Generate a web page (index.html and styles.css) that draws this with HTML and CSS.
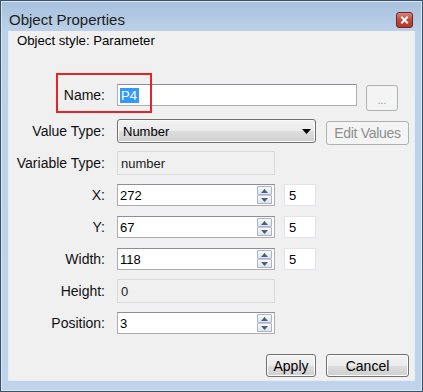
FILE: index.html
```html
<!DOCTYPE html>
<html>
<head>
<meta charset="utf-8">
<title>Object Properties</title>
<link rel="stylesheet" href="styles.css">
</head>
<body>
<div class="window">
  <div class="titlebar">
    <span class="title">Object Properties</span>
    <span class="close">
      <svg width="17" height="16" viewBox="0 0 17 16">
        <defs>
          <linearGradient id="cg" x1="0" y1="0" x2="0" y2="1">
            <stop offset="0" stop-color="#d98a80"/>
            <stop offset="0.5" stop-color="#c2473b"/>
            <stop offset="1" stop-color="#b2382c"/>
          </linearGradient>
        </defs>
        <rect x="0.5" y="0.5" width="16" height="15" rx="2.5" fill="url(#cg)" stroke="#6b2a25"/>
        <path d="M6 5.5 L11 10.5 M11 5.5 L6 10.5" stroke="#ffffff" stroke-width="2" stroke-linecap="square"/>
      </svg>
    </span>
  </div>
  <div class="client">
    <div class="style-line">Object style: Parameter</div>
    <div class="form">
      <div class="row row-name">
        <span class="lbl">Name:</span>
        <div class="field text name-field"><span class="selected">P4</span></div>
        <span class="btn disabled dots">...</span>
        <span class="mark"></span>
      </div>
      <div class="row row-type">
        <span class="lbl">Value Type:</span>
        <div class="select">
          <span>Number</span>
          <svg class="caret" width="9" height="5" viewBox="0 0 9 5"><path d="M0 0 H9 L4.5 5 Z" fill="#000"/></svg>
        </div>
        <span class="btn disabled edit">Edit Values</span>
      </div>
      <div class="row">
        <span class="lbl">Variable Type:</span>
        <div class="field readonly">number</div>
      </div>
      <div class="row">
        <span class="lbl">X:</span>
        <div class="field spin"><span class="val">272</span>
          <span class="arrows"><span class="arr up"><svg width="7" height="4" viewBox="0 0 7 4"><path d="M0 4 L3.5 0 L7 4 Z" fill="#4c5e7d"/></svg></span><span class="arr down"><svg width="7" height="4" viewBox="0 0 7 4"><path d="M0 0 H7 L3.5 4 Z" fill="#4c5e7d"/></svg></span></span>
        </div>
        <div class="field small">5</div>
      </div>
      <div class="row">
        <span class="lbl">Y:</span>
        <div class="field spin"><span class="val">67</span>
          <span class="arrows"><span class="arr up"><svg width="7" height="4" viewBox="0 0 7 4"><path d="M0 4 L3.5 0 L7 4 Z" fill="#4c5e7d"/></svg></span><span class="arr down"><svg width="7" height="4" viewBox="0 0 7 4"><path d="M0 0 H7 L3.5 4 Z" fill="#4c5e7d"/></svg></span></span>
        </div>
        <div class="field small">5</div>
      </div>
      <div class="row">
        <span class="lbl">Width:</span>
        <div class="field spin"><span class="val">118</span>
          <span class="arrows"><span class="arr up"><svg width="7" height="4" viewBox="0 0 7 4"><path d="M0 4 L3.5 0 L7 4 Z" fill="#4c5e7d"/></svg></span><span class="arr down"><svg width="7" height="4" viewBox="0 0 7 4"><path d="M0 0 H7 L3.5 4 Z" fill="#4c5e7d"/></svg></span></span>
        </div>
        <div class="field small">5</div>
      </div>
      <div class="row">
        <span class="lbl">Height:</span>
        <div class="field readonly">0</div>
      </div>
      <div class="row">
        <span class="lbl">Position:</span>
        <div class="field spin"><span class="val">3</span>
          <span class="arrows"><span class="arr up"><svg width="7" height="4" viewBox="0 0 7 4"><path d="M0 4 L3.5 0 L7 4 Z" fill="#4c5e7d"/></svg></span><span class="arr down"><svg width="7" height="4" viewBox="0 0 7 4"><path d="M0 0 H7 L3.5 4 Z" fill="#4c5e7d"/></svg></span></span>
        </div>
      </div>
    </div>
    <div class="actions">
      <span class="btn apply">Apply</span>
      <span class="btn cancel">Cancel</span>
    </div>
  </div>
</div>
</body>
</html>
```

FILE: styles.css
```css
* { box-sizing: border-box; }
html, body { margin: 0; padding: 0; }
body {
  width: 423px;
  height: 392px;
  font-family: "Liberation Sans", Arial, sans-serif;
  font-size: 13px;
  color: #000;
  background: #fff;
}
.window {
  width: 423px;
  height: 392px;
  border: 1px solid #3d5166;
  background: linear-gradient(to bottom, #a7c0dc 0px, #bcd1e8 30px, #bfd4eb 100%);
  display: flex;
  flex-direction: column;
  box-shadow: inset 1px 1px 0 #d9e6f4, inset -1px -1px 0 #d9e6f4;
}
.titlebar {
  height: 30px;
  flex: none;
  display: flex;
  align-items: flex-start;
  justify-content: space-between;
  padding: 0 9px 0 8px;
}
.title {
  font-size: 15px;
  line-height: 18px;
  margin-top: 10px;
  color: #1c1c1c;
}
.close {
  display: block;
  width: 17px;
  height: 16px;
  margin-top: 11px;
}
.close svg { display: block; }
.client {
  flex: 1;
  margin: 0 7px 10px 7px;
  background: #f0f0f0;
  border: 1px solid #e6edf5;
  border-top: none;
  display: flex;
  flex-direction: column;
}
.style-line {
  line-height: 16px;
  padding: 2px 0 0 8px;
  font-size: 13.2px;
}
.form {
  margin-top: 30px;
  display: flex;
  flex-direction: column;
}
.row {
  height: 32px;
  display: flex;
  align-items: center;
  gap: 9px;
  position: relative;
}
.row-name { margin-bottom: 4px; }
.lbl {
  width: 96px;
  margin-right: 3px;
  text-align: right;
  color: #111;
  flex: none;
  font-size: 14px;
}
.field {
  height: 22px;
  border: 1px solid #abadb3;
  border-top-color: #8a8f99;
  background: #fff;
  display: flex;
  align-items: center;
  padding-left: 2px;
  flex: none;
}
.name-field { width: 240px; }
.selected {
  background: #3399ff;
  color: #fff;
  padding: 0 2px 0 1px;
  line-height: 15px;
}
.readonly {
  width: 158px;
  height: 24px;
  background: #f0f0f0;
  border: 1px solid #dadada;
  padding-left: 3px;
  color: #222;
}
.spin {
  width: 158px;
  justify-content: space-between;
  padding: 0 1px 0 2px;
}
.arrows {
  display: flex;
  flex-direction: column;
  width: 15px;
  height: 18px;
  margin-right: 1px;
}
.arr {
  flex: 1;
  border: 1px solid #a9b5c6;
  background: linear-gradient(to bottom, #fbfcfe, #dce3ec);
  display: flex;
  align-items: center;
  justify-content: center;
  border-radius: 1px;
}
.arr + .arr { border-top-color: #c1c9d5; }
.arr svg { display: block; }
.small {
  width: 32px;
  border: 1px solid #e1e3e8;
  padding-left: 4px;
}
.select {
  width: 199px;
  height: 24px;
  border: 1px solid #707070;
  border-radius: 3px;
  background: linear-gradient(to bottom, #f2f2f2 0%, #ebebeb 50%, #dddddd 51%, #cfcfcf 100%);
  display: flex;
  align-items: center;
  justify-content: space-between;
  padding: 0 4px 0 5px;
  flex: none;
  box-shadow: inset 0 0 0 1px #fcfcfc;
}
.caret { display: block; }
.btn {
  display: flex;
  align-items: center;
  justify-content: center;
  border: 1px solid #707070;
  border-radius: 3px;
  background: linear-gradient(to bottom, #f2f2f2 0%, #ebebeb 50%, #dddddd 51%, #cfcfcf 100%);
  box-shadow: inset 0 0 0 1px #fcfcfc;
  height: 24px;
  flex: none;
  font-size: 14px;
}
.btn.disabled {
  border-color: #adb2b5;
  background: #f4f4f4;
  color: #8d8d8d;
  box-shadow: none;
}
.dots {
  width: 32px;
  height: 26px;
  align-self: flex-start;
  margin-top: 6px;
  font-size: 10px;
  color: #a0a0a0;
  padding-top: 4px;
}
.edit {
  width: 83px;
  margin-left: 1px;
  align-self: flex-start;
  margin-top: 6px;
  letter-spacing: -0.3px;
}
.mark {
  position: absolute;
  left: 47px;
  top: -6px;
  width: 96px;
  height: 40px;
  border: 2px solid #e3242b;
}
.actions {
  margin-top: 15px;
  display: flex;
  justify-content: flex-end;
  gap: 10px;
  padding-right: 5px;
}
.apply { width: 50px; height: 23px; }
.cancel { width: 83px; height: 23px; }
```
